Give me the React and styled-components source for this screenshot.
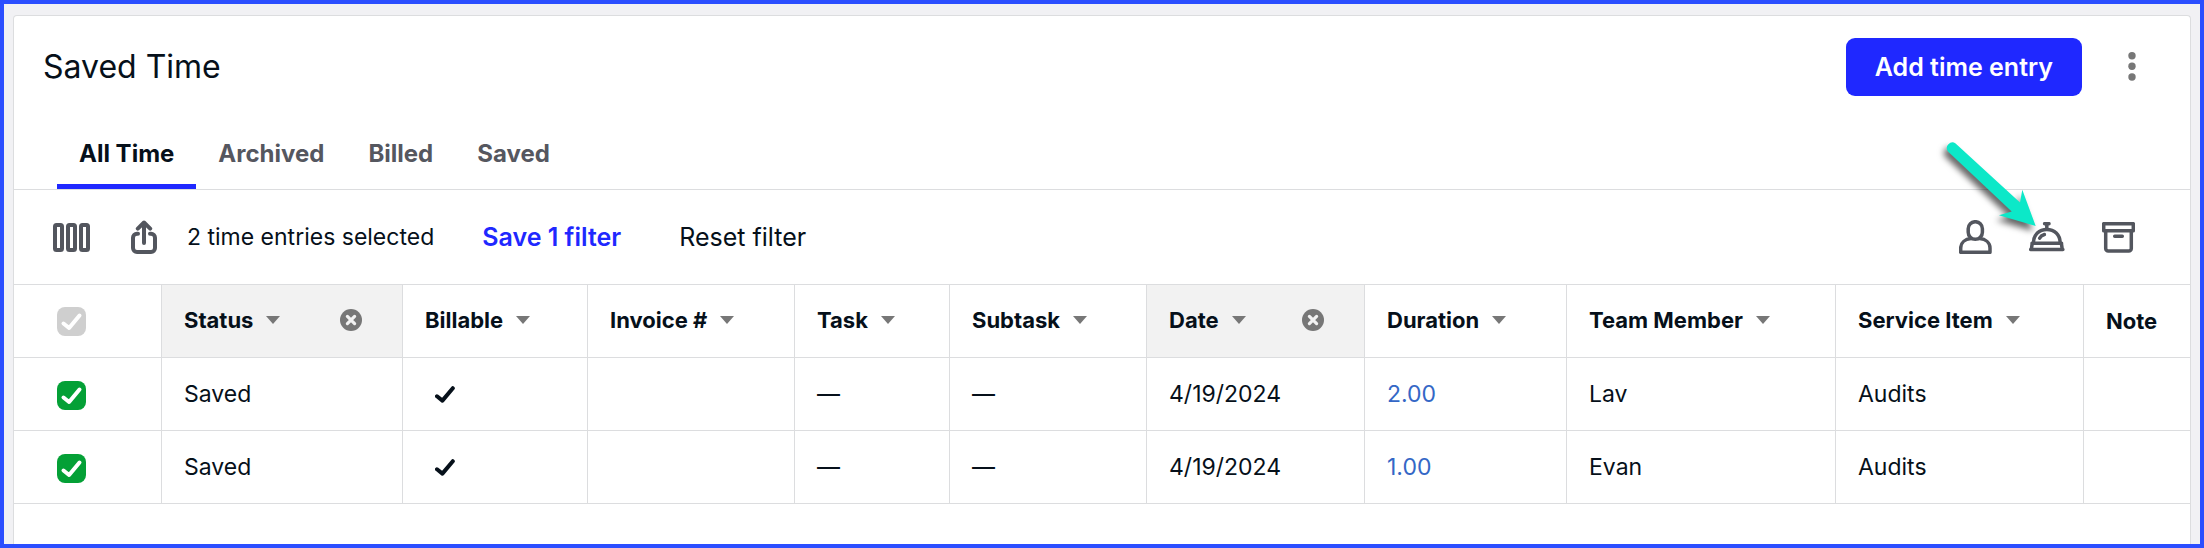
import React, { useState } from 'react'
import styled, { createGlobalStyle } from 'styled-components'

const tabs = ['All Time', 'Archived', 'Billed', 'Saved']

const columns = [
  { name: 'Status', width: 241, filtered: true },
  { name: 'Billable', width: 185 },
  { name: 'Invoice #', width: 207 },
  { name: 'Task', width: 155 },
  { name: 'Subtask', width: 197 },
  { name: 'Date', width: 218, filtered: true },
  { name: 'Duration', width: 202 },
  { name: 'Team Member', width: 269 },
  { name: 'Service Item', width: 248 },
]

const entries = [
  { id: 1, status: 'Saved', billable: true, invoice: '', task: '—', subtask: '—', date: '4/19/2024', duration: '2.00', member: 'Lav', service: 'Audits' },
  { id: 2, status: 'Saved', billable: true, invoice: '', task: '—', subtask: '—', date: '4/19/2024', duration: '1.00', member: 'Evan', service: 'Audits' },
]

const ColumnsIcon = () => (
  <Icon width="37" height="29" viewBox="0 0 37 29" $weight={4}>
    <rect x="2" y="2" width="7" height="25" rx="1.5" />
    <rect x="15" y="2" width="7" height="25" rx="1.5" />
    <rect x="28" y="2" width="7" height="25" rx="1.5" />
  </Icon>
)

const ShareIcon = () => (
  <Icon width="26" height="34" viewBox="0 0 26 34" $weight={4}>
    <path d="M7 13.700H6a4 4 0 0 0-4 4V28a4 4 0 0 0 4 4h14a4 4 0 0 0 4-4V17.700a4 4 0 0 0-4-4h-1" />
    <path d="M13 2.500V23M6.800 8.600 13 2.500l6.200 6.100" />
  </Icon>
)

const UserIcon = () => (
  <Icon width="33" height="34" viewBox="0 0 33 34">
    <rect x="9.2" y="1.7" width="14.2" height="17.6" rx="7.1" />
    <path d="M12 18.6C6.2 19.2 1.7 22.6 1.7 28v4.300h29.300V28c0-5.400-4.500-8.800-10.300-9.400" />
  </Icon>
)

const BellIcon = () => (
  <Icon width="36" height="30" viewBox="0 0 36 30">
    <path d="M15.600 1.700h4.400M17.800 2v5" />
    <path d="M4.400 20.800C4.600 12.600 10.200 7.400 17.800 7.400s13.200 5.200 13.400 13.400" />
    <path d="M3 21.200h29.600M3.200 21.500 2.400 27M32.400 21.500l.8 5.500M1.700 27.500h32.200" />
    <path d="M10.600 16.200c.9-1.800 2.600-3.100 4.800-3.700" />
  </Icon>
)

const ArchiveIcon = () => (
  <Icon width="33" height="31" viewBox="0 0 33 31">
    <rect x="1.700" y="1.700" width="29.600" height="7" />
    <path d="M3.700 9v17.500a2.500 2.500 0 0 0 2.500 2.500h20.600a2.500 2.500 0 0 0 2.500-2.500V9M12.700 14.300h7.600" />
  </Icon>
)

const DotsIcon = () => (
  <svg width="8" height="30" viewBox="0 0 8 30" fill="#777777" aria-hidden="true">
    <circle cx="4" cy="3.700" r="3.700" />
    <circle cx="4" cy="14.300" r="3.700" />
    <circle cx="4" cy="25" r="3.700" />
  </svg>
)

const ClearIcon = () => (
  <svg width="22" height="22" viewBox="0 0 22 22" aria-hidden="true">
    <circle cx="11" cy="11" r="11" fill="#777777" />
    <path d="m7.400 7.400 7.200 7.200m0-7.200-7.200 7.200" stroke="#f2f2f2" strokeWidth="3.200" strokeLinecap="round" />
  </svg>
)

const Pointer = () => (
  <PointerArrow width="120" height="120" viewBox="0 0 120 120" aria-hidden="true">
    <path
      d="M25.600 23.500 90 82.500 92.300 69.700 105.700 106 69 95.200 81.700 91.500 18 31.500A5.600 5.600 0 0 1 25.600 23.500Z"
      fill="#0ce8c8"
    />
  </PointerArrow>
)

const SelectBox = ({ label, muted, checked, onChange }) => (
  <CheckLabel>
    <CheckInput type="checkbox" aria-label={label} $muted={muted} checked={checked} onChange={onChange} />
    {checked && (
      <CheckMark width="29" height="29" viewBox="0 0 29 29" aria-hidden="true">
        <path d="m6.500 16.500 5.600 4.500L22.500 8.500" />
      </CheckMark>
    )}
  </CheckLabel>
)

const App = () => {
  const [activeTab, setActiveTab] = useState('All Time')
  const [selected, setSelected] = useState([1, 2])

  const toggle = (id) =>
    setSelected(selected.includes(id) ? selected.filter((item) => item !== id) : [...selected, id])

  const toggleAll = () =>
    setSelected(selected.length === entries.length ? [] : entries.map((entry) => entry.id))

  return (
    <Frame>
      <GlobalStyle />
      <Card>
        <Header>
          <Title>Saved Time</Title>
          <HeaderActions>
            <AddButton type="button">Add time entry</AddButton>
            <IconButton type="button" aria-label="More options">
              <DotsIcon />
            </IconButton>
          </HeaderActions>
        </Header>

        <Tabs>
          {tabs.map((tab) => (
            <Tab key={tab} type="button" $active={tab === activeTab} onClick={() => setActiveTab(tab)}>
              {tab}
            </Tab>
          ))}
        </Tabs>

        <Toolbar>
          <ToolGroup>
            <IconButton type="button" aria-label="Columns">
              <ColumnsIcon />
            </IconButton>
            <IconButton type="button" aria-label="Export">
              <ShareIcon />
            </IconButton>
          </ToolGroup>
          <Selection>{selected.length} time entries selected</Selection>
          <FilterButtons>
            <TextButton type="button" $primary>Save 1 filter</TextButton>
            <TextButton type="button">Reset filter</TextButton>
          </FilterButtons>
          <RowActions>
            <IconButton type="button" aria-label="Assign team member">
              <UserIcon />
            </IconButton>
            <IconButton type="button" aria-label="Assign service item">
              <BellIcon />
              <Pointer />
            </IconButton>
            <IconButton type="button" aria-label="Archive">
              <ArchiveIcon />
            </IconButton>
          </RowActions>
        </Toolbar>

        <Table>
          <thead>
            <tr>
              <HeadCell $width={148} $select>
                <SelectBox
                  label="Select all time entries"
                  muted
                  checked={selected.length === entries.length}
                  onChange={toggleAll}
                />
              </HeadCell>
              {columns.map((column) => (
                <HeadCell key={column.name} $width={column.width} $filtered={column.filtered}>
                  <HeadContent>
                    <SortButton type="button">
                      {column.name}
                      <Caret />
                    </SortButton>
                    {column.filtered && (
                      <ClearButton type="button" aria-label={`Clear ${column.name} filter`}>
                        <ClearIcon />
                      </ClearButton>
                    )}
                  </HeadContent>
                </HeadCell>
              ))}
              <HeadCell>Note</HeadCell>
            </tr>
          </thead>
          <tbody>
            {entries.map((entry) => (
              <tr key={entry.id}>
                <SelectCell>
                  <SelectBox
                    label={`Select entry of ${entry.member}`}
                    checked={selected.includes(entry.id)}
                    onChange={() => toggle(entry.id)}
                  />
                </SelectCell>
                <Cell>{entry.status}</Cell>
                <Cell>
                  {entry.billable && (
                    <BillableMark width="20" height="17" viewBox="0 0 20 17" role="img" aria-label="Billable">
                      <path d="m2 10.300 5.400 4.300L17.800 2.200" />
                    </BillableMark>
                  )}
                </Cell>
                <Cell>{entry.invoice}</Cell>
                <Cell>{entry.task}</Cell>
                <Cell>{entry.subtask}</Cell>
                <Cell>{entry.date}</Cell>
                <Cell>
                  <DurationLink href="#duration">{entry.duration}</DurationLink>
                </Cell>
                <Cell>{entry.member}</Cell>
                <Cell>{entry.service}</Cell>
                <Cell />
              </tr>
            ))}
          </tbody>
        </Table>
      </Card>
    </Frame>
  )
}

export default App

const GlobalStyle = createGlobalStyle`
  * {
    box-sizing: border-box;
  }
  body {
    margin: 0;
    color: #06101a;
    font-family: Inter, "Liberation Sans", sans-serif;
    font-size: 23px;
    line-height: 30px;
  }
  button {
    padding: 0;
    border: 0;
    background: none;
    color: inherit;
    font: inherit;
    cursor: pointer;
  }
`
const Frame = styled.div`
  display: flex;
  flex-direction: column;
  min-height: 100vh;
  padding: 11px 9px 0;
  border: 4px solid #2b4eff;
  background: #f1f1f4;
`
const Card = styled.main`
  flex: 1;
  border: 1px solid #dcdddf;
  border-bottom: 0;
  border-radius: 4px 4px 0 0;
  background: #ffffff;
`
const Header = styled.header`
  display: flex;
  align-items: center;
  justify-content: space-between;
  padding: 22px 54px 0 29px;
`
const Title = styled.h1`
  margin: 0;
  font-size: 32px;
  font-weight: 400;
  line-height: 40px;
`
const HeaderActions = styled.div`
  display: flex;
  align-items: center;
  gap: 46px;
`
const AddButton = styled.button`
  && {
    height: 58px;
    padding: 0 29px;
    border-radius: 9px;
    background: #1f28ff;
    color: #ffffff;
    font-size: 25px;
    font-weight: 600;
  }
`
const Tabs = styled.nav`
  display: flex;
  padding: 43px 43px 0;
  border-bottom: 1px solid #dcdddf;
`
const Tab = styled.button`
  && {
    padding: 0 22px 15px;
    border-bottom: 5px solid ${({ $active }) => ($active ? '#1f28ff' : 'transparent')};
    color: ${({ $active }) => ($active ? '#06101a' : '#55575f')};
    font-size: 24px;
    font-weight: 700;
  }
`
const Toolbar = styled.div`
  display: flex;
  align-items: center;
  height: 95px;
  padding: 0 55px 0 39px;
  border-bottom: 1px solid #dcdddf;
`
const ToolGroup = styled.div`
  display: flex;
  align-items: center;
  gap: 41px;
`
const Selection = styled.span`
  margin-left: 30px;
`
const FilterButtons = styled.div`
  display: flex;
  gap: 58px;
  margin-left: 48px;
`
const TextButton = styled.button`
  && {
    color: ${({ $primary }) => ($primary ? '#1f28ff' : '#06101a')};
    font-size: 25px;
    font-weight: ${({ $primary }) => ($primary ? 600 : 400)};
  }
`
const RowActions = styled.div`
  display: flex;
  align-items: center;
  gap: 37px;
  margin-left: auto;
`
const IconButton = styled.button`
  position: relative;
  display: flex;
`
const Icon = styled.svg.attrs({ 'aria-hidden': true })`
  display: block;
  fill: none;
  stroke: #53565e;
  stroke-width: ${({ $weight }) => $weight || 3.5};
  stroke-linecap: round;
  stroke-linejoin: round;
`
const PointerArrow = styled.svg`
  position: absolute;
  top: -102px;
  left: -99px;
  overflow: visible;
  filter: drop-shadow(-3px 5px 3px rgba(0, 0, 0, 0.6));
  pointer-events: none;
`
const Table = styled.table`
  width: 100%;
  table-layout: fixed;
  border-collapse: separate;
  border-spacing: 0;
`
const HeadCell = styled.th`
  width: ${({ $width }) => ($width ? `${$width}px` : 'auto')};
  height: 73px;
  padding: 0 0 0 ${({ $select }) => ($select ? '43px' : '22px')};
  border-right: 1px solid #dcdddf;
  border-bottom: 1px solid #dcdddf;
  background: ${({ $filtered }) => ($filtered ? '#f2f2f2' : '#ffffff')};
  font-size: 22px;
  font-weight: 700;
  text-align: left;
  &:last-child {
    border-right: 0;
  }
`
const HeadContent = styled.div`
  display: flex;
  align-items: center;
  justify-content: space-between;
  padding: 0 40px 2px 0;
`
const SortButton = styled.button`
  display: flex;
  align-items: center;
  gap: 13px;
`
const Caret = styled.span`
  border: 7px solid transparent;
  border-top: 8px solid #777777;
  border-bottom: 0;
`
const ClearButton = styled.button`
  display: flex;
`
const Cell = styled.td`
  height: 73px;
  padding: 0 0 0 22px;
  border-right: 1px solid #dcdddf;
  border-bottom: 1px solid #dcdddf;
  &:last-child {
    border-right: 0;
  }
`
const SelectCell = styled(Cell)`
  padding: 2px 0 0 43px;
`
const CheckLabel = styled.label`
  display: grid;
  width: 29px;
  height: 29px;
`
const CheckInput = styled.input`
  grid-area: 1 / 1;
  width: 29px;
  height: 29px;
  margin: 0;
  appearance: none;
  border: 2px solid #cfcfcf;
  border-radius: 8px;
  &:checked {
    border: 0;
    background: ${({ $muted }) => ($muted ? '#cfcfcf' : '#04a036')};
  }
`
const CheckMark = styled.svg`
  grid-area: 1 / 1;
  fill: none;
  stroke: #ffffff;
  stroke-width: 4;
  stroke-linecap: round;
  stroke-linejoin: round;
  pointer-events: none;
`
const BillableMark = styled.svg`
  display: block;
  margin-left: 10px;
  fill: none;
  stroke: #06101a;
  stroke-width: 4;
  stroke-linecap: round;
  stroke-linejoin: round;
`
const DurationLink = styled.a`
  color: #3467c6;
  text-decoration: none;
`
